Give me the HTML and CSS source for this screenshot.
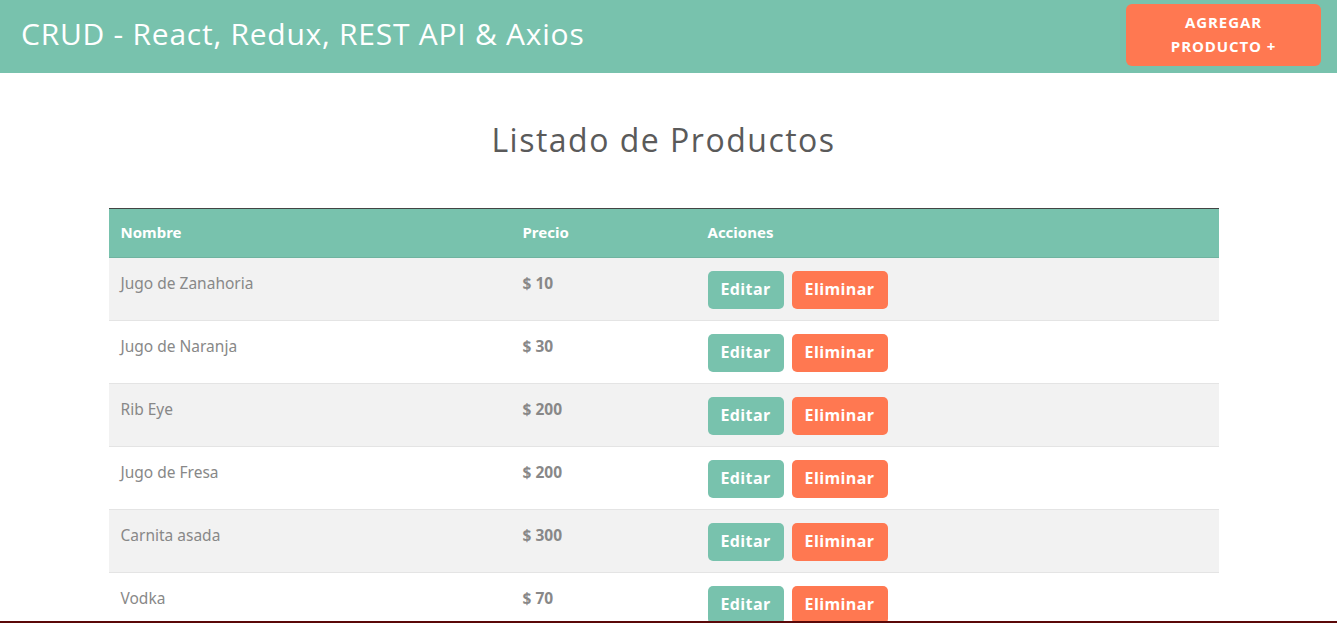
FILE: index.html
```html
<!DOCTYPE html>
<html lang="es">
<head>
<meta charset="utf-8">
<title>CRUD</title>
<link rel="stylesheet" href="styles.css">
</head>
<body>
<header class="navbar">
  <h1 class="brand">CRUD - React, Redux, REST API &amp; Axios</h1>
  <a class="btn-add" href="#">Agregar<br>Producto +</a>
</header>
<main class="container">
  <h2 class="title">Listado de Productos</h2>
  <table class="table">
    <thead>
      <tr><th class="c-name">Nombre</th><th class="c-price">Precio</th><th>Acciones</th></tr>
    </thead>
    <tbody>
      <tr><td>Jugo de Zanahoria</td><td class="price">$ 10</td><td class="act"><a class="btn edit" href="#">Editar</a><a class="btn del" href="#">Eliminar</a></td></tr>
      <tr><td>Jugo de Naranja</td><td class="price">$ 30</td><td class="act"><a class="btn edit" href="#">Editar</a><a class="btn del" href="#">Eliminar</a></td></tr>
      <tr><td>Rib Eye</td><td class="price">$ 200</td><td class="act"><a class="btn edit" href="#">Editar</a><a class="btn del" href="#">Eliminar</a></td></tr>
      <tr><td>Jugo de Fresa</td><td class="price">$ 200</td><td class="act"><a class="btn edit" href="#">Editar</a><a class="btn del" href="#">Eliminar</a></td></tr>
      <tr><td>Carnita asada</td><td class="price">$ 300</td><td class="act"><a class="btn edit" href="#">Editar</a><a class="btn del" href="#">Eliminar</a></td></tr>
      <tr><td>Vodka</td><td class="price">$ 70</td><td class="act"><a class="btn edit" href="#">Editar</a><a class="btn del" href="#">Eliminar</a></td></tr>
    </tbody>
  </table>
</main>
<div class="bottom-line"></div>
</body>
</html>
```
FILE: styles.css
```css
* { box-sizing: border-box; }
html, body { margin: 0; padding: 0; }
body {
  font-family: "Noto Sans", "Open Sans", sans-serif;
  color: #888;
  background: #fff;
  font-size: 16px;
  line-height: 1.5;
}
.navbar {
  background: #78c2ad;
  height: 73px;
  display: flex;
  align-items: center;
  justify-content: space-between;
  padding: 0 16px 0 21px;
}
.brand {
  margin: 0 0 6px;
  font-family: "Open Sans", sans-serif;
  font-weight: 400;
  font-size: 30px;
  color: #fff;
  letter-spacing: 0.75px;
  line-height: 1;
}
.btn-add {
  display: block;
  width: 195px;
  height: 62px;
  margin-top: -4px;
  background: #ff7851;
  color: #fff;
  text-decoration: none;
  text-transform: uppercase;
  font-family: "Open Sans", sans-serif;
  font-weight: 700;
  font-size: 15px;
  letter-spacing: 0.9px;
  line-height: 24px;
  text-align: center;
  padding-top: 6px;
  border-radius: 6px;
}
.container {
  width: 1110px;
  margin-left: calc(50% - 560px);
}
.title {
  margin: 48px 0 49px;
  text-align: center;
  font-family: "Open Sans", sans-serif;
  font-weight: 400;
  font-size: 32px;
  letter-spacing: 1.5px;
  line-height: 38px;
  color: #5a5a5a;
}
.table {
  width: 100%;
  border-collapse: collapse;
}
.table thead tr {
  background: #78c2ad;
  border-top: 1px solid #444;
}
.table th {
  color: #fff;
  text-align: left;
  font-weight: 700;
  font-size: 15px;
  padding: 11px 12px 12px;
  height: 49px;
  border-bottom: 1px solid #6fb3a0;
}
.c-name { width: 402px; }
.c-price { width: 185px; }
.table td {
  padding: 14px 12px 10px;
  vertical-align: top;
  height: 63px;
  border-top: 1px solid #e4e4e4;
  font-size: 15.5px;
}
.table tbody tr:first-child td { border-top: none; }
.table tbody tr:nth-child(odd) { background: #f2f2f2; }
.price { font-weight: 700; }
.table td.act { padding-top: 13px; padding-bottom: 11px; }
.btn {
  display: inline-block;
  height: 38px;
  line-height: 37px;
  border: none;
  border-radius: 5px;
  color: #fff;
  font-family: "Open Sans", sans-serif;
  font-weight: 700;
  font-size: 16px;
  letter-spacing: 0.4px;
  text-decoration: none;
  vertical-align: top;
  text-align: center;
  padding: 0;
}
.edit { background: #78c2ad; width: 76px; margin-right: 8px; }
.del { background: #ff7851; width: 96px; }
.bottom-line {
  position: fixed;
  left: 0;
  right: 0;
  bottom: 0;
  height: 2px;
  background: #5a0808;
}
```
